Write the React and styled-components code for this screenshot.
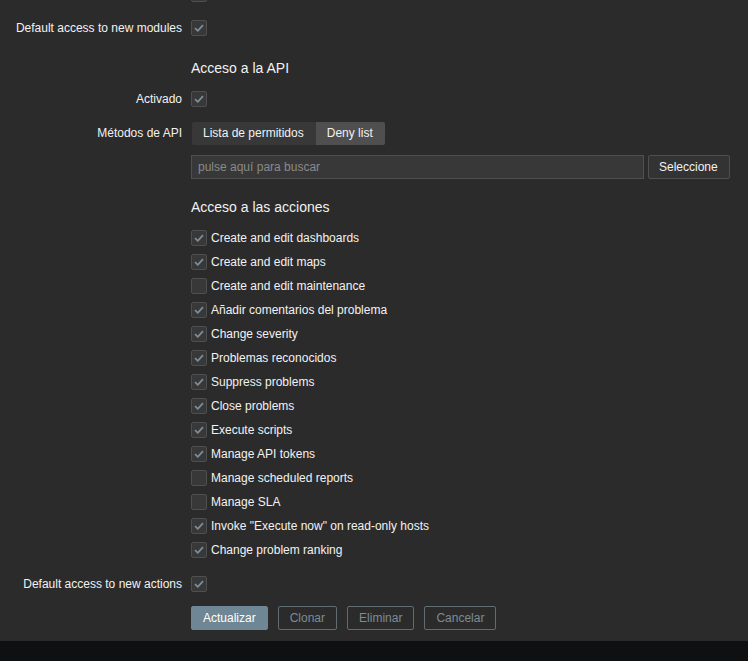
import React from "react";
import styled, { createGlobalStyle } from "styled-components";

const Global = createGlobalStyle`
  html, body { margin: 0; padding: 0; background: #2b2b2b; }
  body { font-family: "Liberation Sans", Arial, sans-serif; font-size: 12px; color: #f2f2f2; overflow: hidden; }
`;

const Page = styled.div`
  height: 661px;
  display: flex;
  flex-direction: column;
  overflow: hidden;
`;

const Form = styled.div`
  flex: 1;
  display: flex;
  flex-direction: column;
  margin-top: -18px;
`;

const Row = styled.div`
  display: grid;
  grid-template-columns: 182px 1fr;
  column-gap: 9px;
  min-height: 24px;
  margin-top: ${(p) => p.$mt ?? 0}px;
  margin-bottom: ${(p) => p.$mb ?? 10}px;
  align-items: ${(p) => (p.$top ? "start" : "center")};
`;

const Label = styled.div`
  text-align: right;
  line-height: 24px;
  white-space: nowrap;
`;

const Field = styled.div`
  display: flex;
  align-items: center;
  gap: ${(p) => p.$gap ?? 0}px;
`;

const Heading = styled.div`
  font-size: 14px;
  line-height: 24px;
`;

const Box = styled.span`
  width: 16px;
  height: 16px;
  box-sizing: border-box;
  border: 1px solid #4f4f4f;
  background: #383838;
  border-radius: 2px;
  display: inline-flex;
  align-items: center;
  justify-content: center;
  flex: none;
`;

const Check = ({ on }) => (
  <Box>
    {on && (
      <svg width="10" height="8" viewBox="0 0 10 8">
        <path d="M1 4.2 L3.8 6.8 L9 1.2" fill="none" stroke="#7d8d97" strokeWidth="1.8" />
      </svg>
    )}
  </Box>
);

const List = styled.div`
  display: flex;
  flex-direction: column;
`;

const Item = styled.label`
  display: flex;
  align-items: center;
  height: 24px;
  gap: 4px;
  white-space: nowrap;
`;

const Seg = styled.div`
  display: flex;
  border-radius: 2px;
  overflow: hidden;
  margin-left: 1px;
`;

const SegBtn = styled.span`
  height: 23px;
  line-height: 23px;
  padding: 0 12px 0 11px;
  background: ${(p) => (p.$active ? "#4f4f4f" : "#383838")};
  color: #f2f2f2;
`;

const Input = styled.div`
  width: 453px;
  height: 24px;
  box-sizing: border-box;
  border: 1px solid #4f4f4f;
  background: #383838;
  color: #8a8a8a;
  padding: 0 6px;
  line-height: 22px;
  font-size: 12px;
`;

const SmallBtn = styled.span`
  height: 24px;
  box-sizing: border-box;
  border: 1px solid #4f4f4f;
  background: #333333;
  border-radius: 2px;
  padding: 0 11px 0 10px;
  line-height: 22px;
  color: #f2f2f2;
`;

const Buttons = styled.div`
  display: flex;
  gap: 10px;
`;

const Btn = styled.span`
  height: 24px;
  box-sizing: border-box;
  border-radius: 2px;
  padding: 0 11px;
  line-height: 22px;
  border: 1px solid ${(p) => (p.$primary ? "#6f8694" : "#5f6c74")};
  background: ${(p) => (p.$primary ? "#6f8694" : "transparent")};
  color: ${(p) => (p.$primary ? "#ffffff" : "#7c8c95")};
`;

const Footer = styled.div`
  height: 20px;
  background: #0e1012;
  flex: none;
`;

const actions = [
  ["Create and edit dashboards", true],
  ["Create and edit maps", true],
  ["Create and edit maintenance", false],
  ["Añadir comentarios del problema", true],
  ["Change severity", true],
  ["Problemas reconocidos", true],
  ["Suppress problems", true],
  ["Close problems", true],
  ["Execute scripts", true],
  ["Manage API tokens", true],
  ["Manage scheduled reports", false],
  ["Manage SLA", false],
  ['Invoke "Execute now" on read-only hosts', true],
  ["Change problem ranking", true],
];

export default function App() {
  return (
    <Page>
      <Global />
      <Form>
        <Row>
          <Label />
          <Field><Check on /></Field>
        </Row>
        <Row>
          <Label>Default access to new modules</Label>
          <Field><Check on /></Field>
        </Row>
        <Row $mt={6} $mb={7}>
          <Label />
          <Heading>Acceso a la API</Heading>
        </Row>
        <Row>
          <Label>Activado</Label>
          <Field><Check on /></Field>
        </Row>
        <Row>
          <Label>Métodos de API</Label>
          <Field>
            <Seg>
              <SegBtn>Lista de permitidos</SegBtn>
              <SegBtn $active>Deny list</SegBtn>
            </Seg>
          </Field>
        </Row>
        <Row>
          <Label />
          <Field $gap={4}>
            <Input>pulse aquí para buscar</Input>
            <SmallBtn>Seleccione</SmallBtn>
          </Field>
        </Row>
        <Row $mt={6} $mb={7}>
          <Label />
          <Heading>Acceso a las acciones</Heading>
        </Row>
        <Row $mb={10} $top>
          <Label />
          <List>
            {actions.map(([t, on]) => (
              <Item key={t}>
                <Check on={on} />
                <span>{t}</span>
              </Item>
            ))}
          </List>
        </Row>
        <Row>
          <Label>Default access to new actions</Label>
          <Field><Check on /></Field>
        </Row>
        <Row>
          <Label />
          <Buttons>
            <Btn $primary>Actualizar</Btn>
            <Btn>Clonar</Btn>
            <Btn>Eliminar</Btn>
            <Btn>Cancelar</Btn>
          </Buttons>
        </Row>
      </Form>
      <Footer />
    </Page>
  );
}
